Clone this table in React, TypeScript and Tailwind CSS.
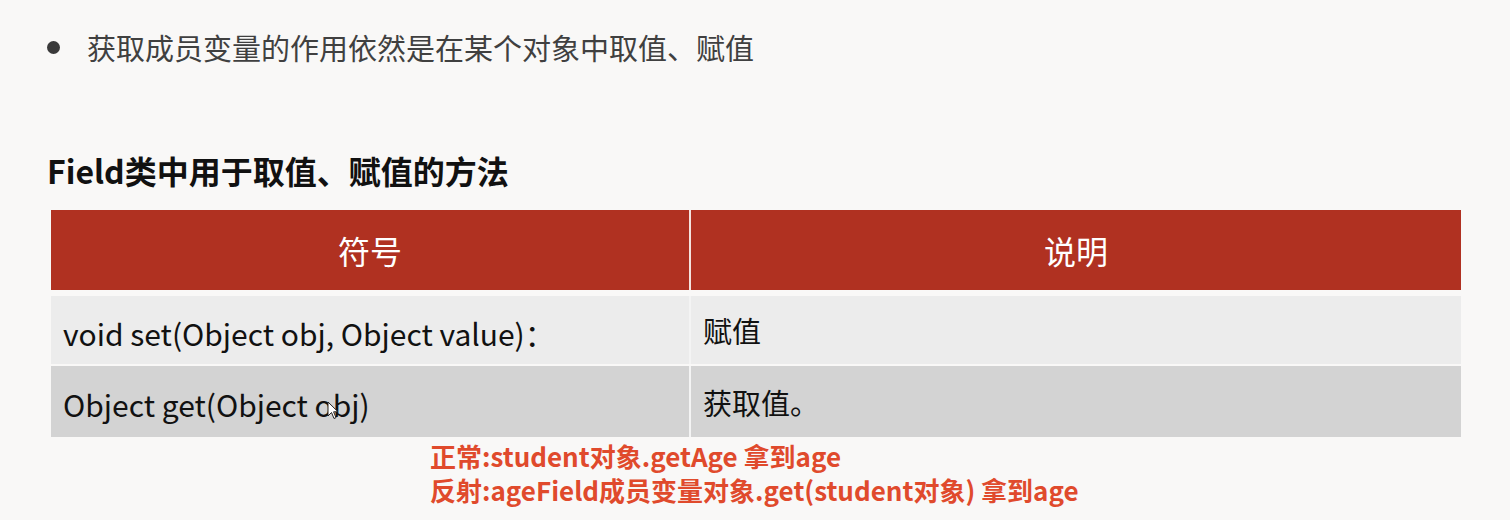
import React from 'react';

const rows = [
  { sig: 'void set(Object obj, Object value)：', desc: '赋值', bg: 'bg-[#ececec]', h: 'h-[68px]' },
  { sig: 'Object get(Object obj)', desc: '获取值。', bg: 'bg-[#d3d3d3]', h: 'h-[71px]' },
];

const Cursor: React.FC = () => (
  <svg className="absolute left-[327px] top-[401px]" width="12" height="19" viewBox="0 0 12 19">
    <path d="M1 1 L1 15 L4.5 11.5 L7 17.5 L9 16.6 L6.6 10.8 L11 10.8 Z" fill="#fff" stroke="#222" strokeWidth="1" />
  </svg>
);

export default function App() {
  return (
    <div className="relative w-[1510px] h-[520px] overflow-hidden bg-[#f9f8f7] font-['Noto_Sans_CJK_SC',sans-serif]">
      {/* bullet */}
      <div className="flex items-center pl-[47px] pt-[27px]">
        <span className="w-[13px] h-[13px] rounded-full bg-[#3a3a3a]" />
        <span className="ml-[27px] text-[29px] leading-[40px] text-[#404040]">
          获取成员变量的作用依然是在某个对象中取值、赋值
        </span>
      </div>

      <h2 className="mt-[82px] pl-[47px] text-[32px] leading-[42px] font-bold text-[#111]">
        Field类中用于取值、赋值的方法
      </h2>

      {/* table */}
      <div className="ml-[51px] mt-[19px] w-[1410px]">
        <div className="flex h-[80px] bg-[#b03121] text-white text-[32px]">
          <div className="w-[640px] flex items-center justify-center border-r-2 border-[#f4e3df]">符号</div>
          <div className="flex-1 flex items-center justify-center">说明</div>
        </div>
        <div className="h-[6px]" />
        {rows.map((r, i) => (
          <div key={i} className={`flex ${r.h} ${r.bg} ${i > 0 ? 'mt-[2px]' : ''}`}>
            <div className="w-[640px] flex items-center pl-[12px] pt-[6px] border-r-2 border-[#f4f4f4] text-[30px] text-[#111]">
              {r.sig}
            </div>
            <div className="flex-1 flex items-center pl-[12px] pt-[2px] text-[29px] text-[#111]">{r.desc}</div>
          </div>
        ))}
      </div>

      {/* red notes */}
      <div className="pl-[430px] pt-[2px] text-[26px] leading-[34px] font-bold text-[#e04a2c]">
        <div>正常:student对象.getAge 拿到age</div>
        <div>反射:ageField成员变量对象.get(student对象) 拿到age</div>
      </div>

      <Cursor />
    </div>
  );
}
